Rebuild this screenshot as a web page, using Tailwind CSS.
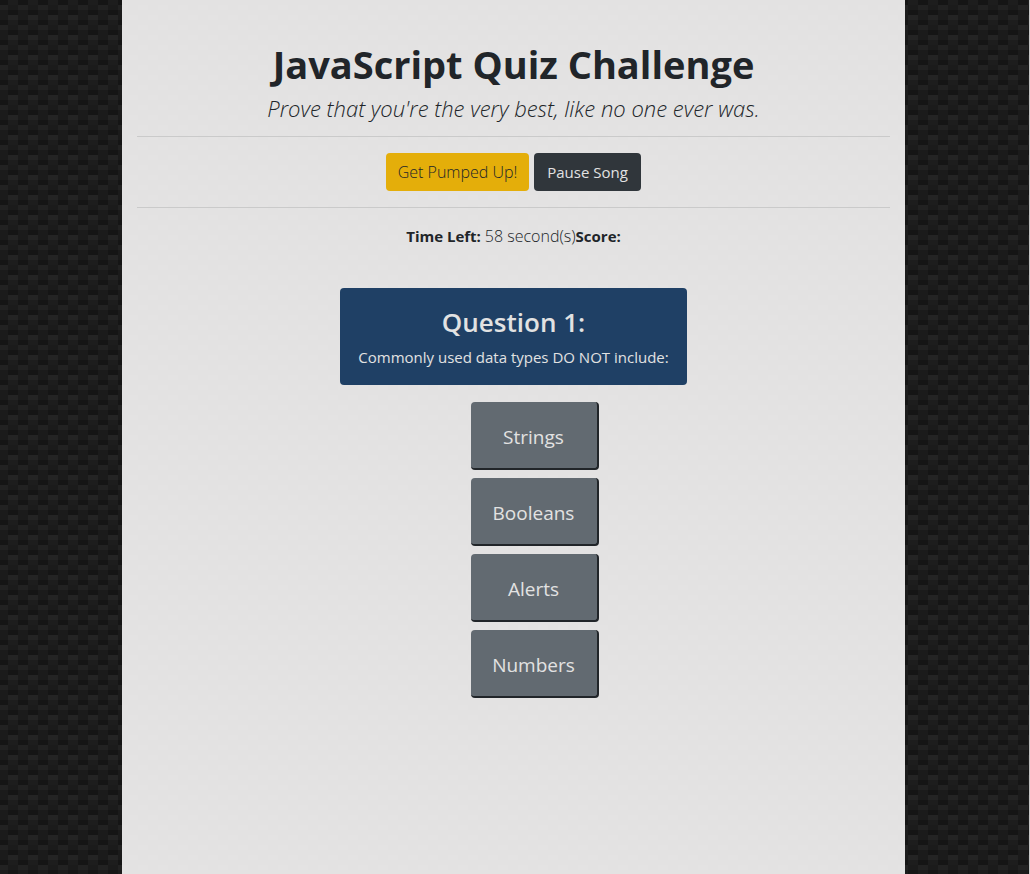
<!DOCTYPE html>
<html lang="en">
<head>
<meta charset="utf-8">
<title>JavaScript Quiz Challenge</title>
<script src="https://cdn.jsdelivr.net/npm/@tailwindcss/browser@4"></script>
</head>
<body class="min-h-screen border-r border-[#c9c9c9] bg-[#1b1b1b] bg-[conic-gradient(from_270deg_at_10px_5px,#1d1d1d_25%,transparent_0),conic-gradient(from_270deg_at_10px_5px,#151515_25%,transparent_0),conic-gradient(from_270deg_at_10px_5px,#242424_25%,transparent_0),conic-gradient(from_270deg_at_10px_5px,#151515_25%,transparent_0),conic-gradient(from_270deg_at_10px_5px,#222222_25%,transparent_0)] bg-size-[20px_20px] bg-position-[8px_0px,8px_10px,8px_15px,18px_0px,18px_5px] pr-0.5 font-['Open_Sans',sans-serif] text-[15px] text-[#212529]">
<main class="mx-auto min-h-screen w-[76.3%] bg-[#f9f8f8]/90 px-[15px] pt-10 text-center">
  <h1 class="text-[38px] leading-12 font-bold">JavaScript Quiz Challenge</h1>
  <p class="mt-1 text-[22px] leading-8 font-light italic">Prove that you're the very best, like no one ever was.</p>
  <hr class="mt-3 mb-4 border-[#cacaca]">
  <div class="flex justify-center gap-[5px]">
    <button type="button" class="w-[143px] rounded bg-[#e4ae0a] py-[7px] text-base leading-6 font-light">Get Pumped Up!</button>
    <button type="button" class="w-[107px] rounded bg-[#30363b] py-[7px] leading-6 text-[#e2e2e2]">Pause Song</button>
  </div>
  <hr class="my-4 border-[#cacaca]">
  <p class="leading-6"><b>Time Left:</b> <span class="text-base font-light">58 second(s)</span><b>Score:</b></p>
  <section class="mx-auto mt-10 w-fit rounded bg-[#1f4065] px-[18px] py-4 text-[#e2e2e2]">
    <h2 class="text-[26px] leading-9 font-semibold">Question 1:</h2>
    <p class="mt-[5px] leading-6">Commonly used data types DO NOT include:</p>
  </section>
  <div class="mt-[17px] flex flex-col items-center gap-2 pl-[42px] text-[19px] text-[#e2e2e2]">
    <button type="button" class="h-17 w-32 rounded border-r-2 border-b-2 border-[#212529] bg-[#626a71] pt-1">Strings</button>
    <button type="button" class="h-17 w-32 rounded border-r-2 border-b-2 border-[#212529] bg-[#626a71] pt-1">Booleans</button>
    <button type="button" class="h-17 w-32 rounded border-r-2 border-b-2 border-[#212529] bg-[#626a71] pt-1">Alerts</button>
    <button type="button" class="h-17 w-32 rounded border-r-2 border-b-2 border-[#212529] bg-[#626a71] pt-1">Numbers</button>
  </div>
</main>
</body>
</html>
